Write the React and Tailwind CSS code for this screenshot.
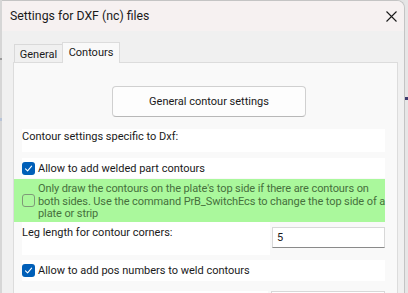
import React from "react";

const font = { fontFamily: 'Roboto, "Liberation Sans", sans-serif' };

function Checked() {
  return (
    <div className="w-[13px] h-[13px] shrink-0 rounded-[3px] bg-[#005fb8] flex items-center justify-center">
      <svg width="9" height="9" viewBox="0 0 9 9" fill="none">
        <path d="M1.5 4.8 L3.6 6.8 L7.6 2.2" stroke="#ffffff" strokeWidth="1.1" strokeLinecap="round" strokeLinejoin="round" />
      </svg>
    </div>
  );
}

function Unchecked() {
  return <div className="w-[13px] h-[13px] shrink-0 rounded-[3px] border border-[#7f9a78] bg-transparent" />;
}

export default function App() {
  return (
    <div className="w-[408px] h-[293px] overflow-hidden bg-[#e4e4e4] flex text-[11px] text-[#1a1a1a]" style={font}>
      <div className="w-[2px] h-full flex flex-col bg-[#d6d6d6]">
        <div className="h-[58px]" />
        <div className="h-[2px] bg-[#9a9a9a]" />
        <div className="h-[58px]" />
        <div className="h-[3px] bg-[#b8c4d8]" />
      </div>
      <div className="w-[403px] h-full flex flex-col bg-[#f0f0f0] rounded-tr-[8px] border-r border-t border-[#c4c4c4] overflow-hidden">
        <div className="h-[30px] shrink-0 bg-[#f6f1f1] flex items-center justify-between pl-[8px] pr-[7px]">
          <span className="leading-[15px] text-[12.3px]">Settings for DXF (nc) files</span>
          <svg width="11" height="11" viewBox="0 0 11 11">
            <path d="M0.5 0.5 L10.5 10.5 M10.5 0.5 L0.5 10.5" stroke="#1a1a1a" strokeWidth="1.1" />
          </svg>
        </div>
        <div className="flex-1 flex flex-col pt-[11px] pl-[11px] pr-[6px]">
          <div className="flex items-end h-[21px] relative z-10 -mb-[1px]">
            <div className="ml-[1px] w-[48px] h-[18px] mb-[1px] border-t border-l border-[#d9d9d9] bg-[#f0f0f0] flex items-center justify-center leading-[15px] pt-[1px]">
              General
            </div>
            <div className="w-[58px] h-[21px] border-t border-l border-r border-[#dcdcdc] bg-[#f9f9f9] flex items-start justify-center pt-[2px] leading-[15px]">
              Contours
            </div>
          </div>
          <div className="flex-1 border border-[#dcdcdc] bg-[#f9f9f9] flex flex-col">
            <div className="mt-[23px] ml-[98px] w-[194px] h-[31px] rounded-[4px] border border-[#d0d0d0] border-b-[#b8b8b8] bg-[#fdfdfd] flex items-center justify-center leading-[15px]">
              General contour settings
            </div>
            <div className="mt-[12px] ml-[8px] w-[363px] h-[23px] bg-white leading-[15px]">
              Contour settings specific to Dxf:
            </div>
            <div className="mt-[6px] ml-[8px] w-[363px] h-[20px] bg-white flex items-center gap-[3px] leading-[15px]">
              <Checked />
              <span>Allow to add welded part contours</span>
            </div>
            <div className="mt-[1px] w-[371px] h-[43px] bg-[#aaf89c] flex items-center pl-[8px] gap-[3px]">
              <Unchecked />
              <div className="leading-[12.5px] text-[#46703c] pt-[3px] whitespace-nowrap tracking-[-0.1px]">
                Only draw the contours on the plate's top side if there are contours on
                <br />
                both sides. Use the command PrB_SwitchEcs to change the top side of a
                <br />
                plate or strip
              </div>
            </div>
            <div className="h-[33px] flex items-start">
              <div className="ml-[8px] w-[248px] h-[33px] bg-white pt-[3px] leading-[15px]">
                Leg length for contour corners:
              </div>
              <div className="ml-[2px] mt-[5px] w-[113px] h-[21px] bg-white border border-[#d8d8d8] border-b-[#8a8a8a] flex items-center pl-[4px] leading-[15px]">
                5
              </div>
            </div>
            <div className="mt-[5px] ml-[8px] w-[363px] h-[21px] bg-white flex items-center gap-[3px] leading-[15px]">
              <Checked />
              <span>Allow to add pos numbers to weld contours</span>
            </div>
            <div className="mt-[10px] flex items-start">
              <div className="ml-[16px] w-[238px] h-[22px] bg-white" />
              <div className="ml-[3px] w-[114px] h-[22px] bg-white border border-[#d8d8d8]" />
            </div>
          </div>
        </div>
      </div>
      <div className="flex-1 h-full flex flex-col bg-[#e6e6e6]">
        <div className="h-[97px]" />
        <div className="h-[3px] bg-[#3c3c6e]" />
      </div>
    </div>
  );
}
